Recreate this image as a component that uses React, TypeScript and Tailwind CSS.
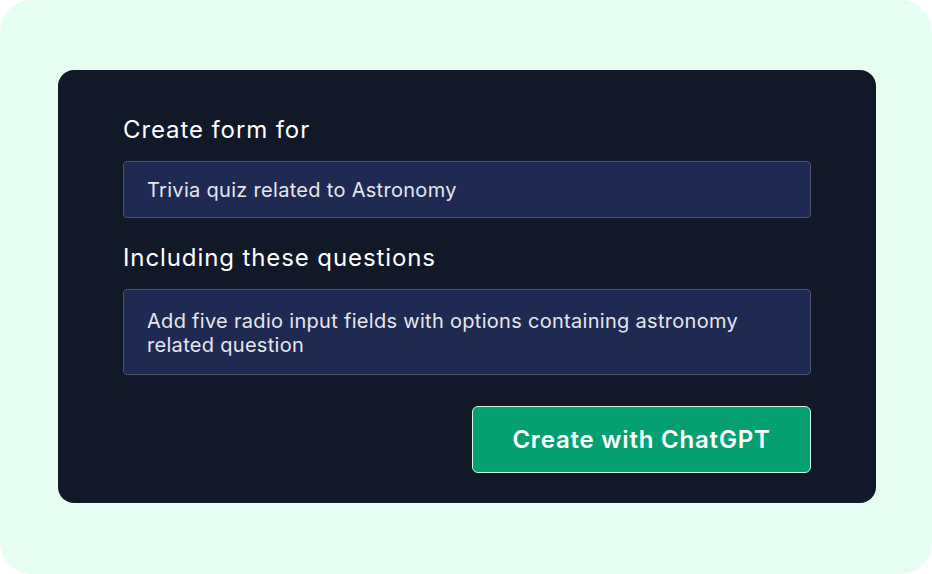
import React from "react";

export default function App() {
  return (
    <div className="w-[932px] h-[574px] bg-white" style={{ fontFamily: "Inter, 'Noto Sans', sans-serif" }}>
      <div className="w-full h-full rounded-[32px] bg-[#e6fdf2] pl-[58px] pt-[70px]">
        <div className="w-[818px] h-[433px] rounded-[16px] bg-[#111827] px-[65px] pt-[44px] flex flex-col">
          <div className="text-[24px] leading-[32px] tracking-[0.9px] text-white">Create form for</div>
          <div className="mt-[15px] h-[57px] rounded-[4px] border border-[#4b5563] bg-[#1e2a52] pl-[23px] flex items-center text-[20px] leading-[24px] tracking-[0.3px] text-[#e5e7eb]">
            Trivia quiz related to Astronomy
          </div>
          <div className="mt-[24px] text-[24px] leading-[32px] tracking-[0.9px] text-white">Including these questions</div>
          <div className="mt-[15px] h-[86px] rounded-[4px] border border-[#4b5563] bg-[#1e2a52] pl-[23px] pr-[40px] pt-[19px] text-[20px] leading-[24px] tracking-[0.3px] text-[#e5e7eb]">
            Add five radio input fields with options containing astronomy related question
          </div>
          <div className="mt-[31px] flex justify-end">
            <button className="w-[339px] h-[67px] rounded-[6px] border border-[#d1fae5] bg-[#04a072] text-white text-[24px] tracking-[0.8px] font-semibold">
              Create with ChatGPT
            </button>
          </div>
        </div>
      </div>
    </div>
  );
}
